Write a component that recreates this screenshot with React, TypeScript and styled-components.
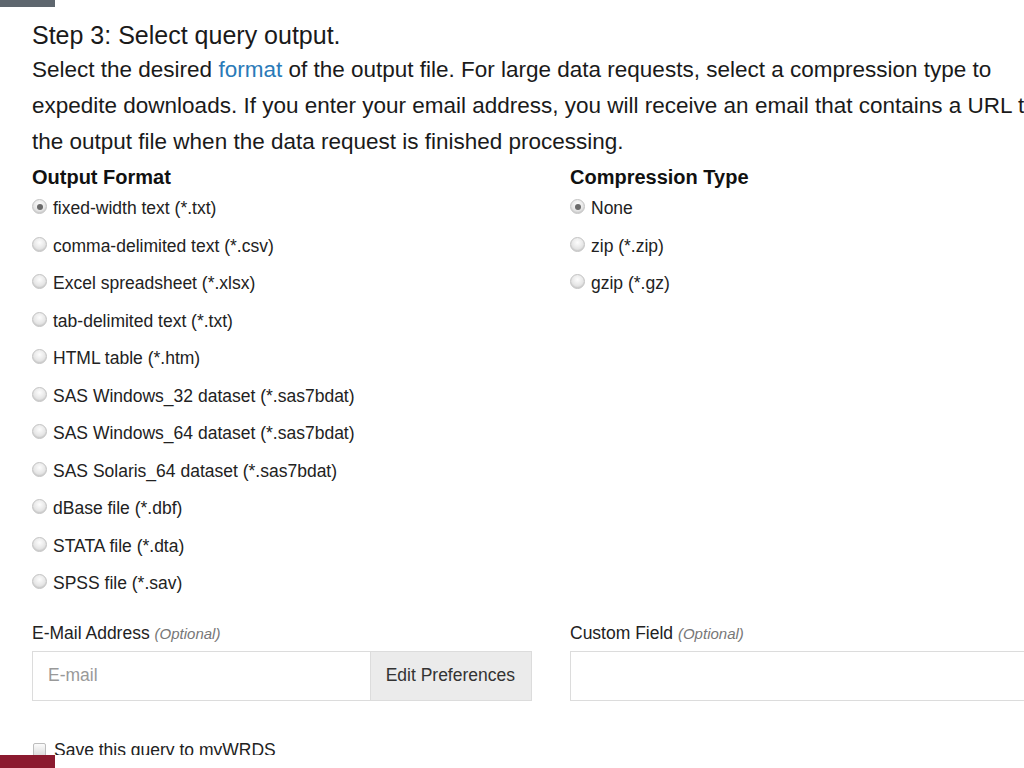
import styled, { createGlobalStyle } from "styled-components";

const GlobalStyle = createGlobalStyle`
    html, body {
        margin: 0;
        padding: 0;
        background: #fff;
        overflow: hidden;
    }
    body {
        font-family: "Liberation Sans", Arial, sans-serif;
        color: #222;
    }
`

const Page = styled.div`
    width: 1070px;
    height: 768px;
    padding: 20px 0 0 32px;
    box-sizing: border-box;
`

const TopTab = styled.div`
    position: fixed;
    top: 0;
    left: 0;
    width: 55px;
    height: 7px;
    background: #5e666e;
`

const BottomStrip = styled.div`
    position: fixed;
    left: 0;
    bottom: 0;
    width: 100%;
    height: 13px;
    background: #fff;
    display: flex;
`

const BottomBrand = styled.div`
    width: 55px;
    height: 100%;
    background: #8b1a2f;
`

const Title = styled.h2`
    margin: 0;
    font-size: 25px;
    line-height: 30px;
    font-weight: normal;
    color: #1a1a1a;
`

const Intro = styled.p`
    margin: 2px 0 0;
    font-size: 22.5px;
    line-height: 36px;
    white-space: nowrap;
    color: #1a1a1a;
`

const Link = styled.a`
    color: #2a7ab8;
    text-decoration: none;
`

const Columns = styled.div`
    display: grid;
    grid-template-columns: 538px 500px;
    margin-top: 4px;
`

const Heading = styled.div`
    font-size: 20px;
    font-weight: bold;
    line-height: 26px;
    color: #111;
`

const OptionList = styled.div`
    display: flex;
    flex-direction: column;
`

const Option = styled.label`
    display: flex;
    align-items: center;
    height: 37.5px;
    gap: 6px;
    font-size: 17.5px;
    color: #222;
`

const RadioDot = styled.span<{ $checked?: boolean }>`
    position: relative;
    flex: none;
    width: 15px;
    height: 15px;
    border-radius: 50%;
    box-sizing: border-box;
    border: 1px solid #c2c2c2;
    background: radial-gradient(circle at 50% 35%, #fdfdfd 0%, #e6e6e6 55%, #cfcfcf 100%);
    box-shadow: inset 0 -1px 1px rgba(0, 0, 0, 0.08);
    margin-top: -4px;

    &::after {
        content: "";
        display: ${p => (p.$checked ? "block" : "none")};
        position: absolute;
        left: 3.5px;
        top: 3.5px;
        width: 6px;
        height: 6px;
        border-radius: 50%;
        background: #6a6a6a;
    }
`

const FieldRow = styled.div`
    display: grid;
    grid-template-columns: 538px 500px;
    margin-top: 18px;
`

const FieldLabel = styled.div`
    font-size: 17.5px;
    line-height: 24px;
    color: #222;
`

const Optional = styled.span`
    font-size: 15px;
    font-style: italic;
    color: #777;
`

const InputGroup = styled.div`
    display: flex;
    width: 500px;
    height: 50px;
    margin-top: 5px;
`

const TextBox = styled.div`
    flex: 1;
    display: flex;
    align-items: center;
    padding-left: 15px;
    box-sizing: border-box;
    border: 1px solid #dcdcdc;
    background: #fff;
    font-size: 17.5px;
    color: #999;
`

const AddonButton = styled.div`
    display: flex;
    align-items: center;
    padding: 0 16px 0 15px;
    border: 1px solid #dcdcdc;
    border-left: none;
    background: #ebebeb;
    font-size: 17.5px;
    color: #333;
`

const SaveRow = styled.label`
    display: flex;
    align-items: center;
    gap: 8px;
    margin-top: 39px;
    padding-left: 1px;
    font-size: 17.5px;
    color: #222;
`

const CheckBox = styled.span`
    flex: none;
    width: 13px;
    height: 14px;
    border-radius: 2px;
    box-sizing: border-box;
    border: 1px solid #bdbdbd;
    background: linear-gradient(#fbfbfb, #dadada);
`

const formats = [
    "fixed-width text (*.txt)",
    "comma-delimited text (*.csv)",
    "Excel spreadsheet (*.xlsx)",
    "tab-delimited text (*.txt)",
    "HTML table (*.htm)",
    "SAS Windows_32 dataset (*.sas7bdat)",
    "SAS Windows_64 dataset (*.sas7bdat)",
    "SAS Solaris_64 dataset (*.sas7bdat)",
    "dBase file (*.dbf)",
    "STATA file (*.dta)",
    "SPSS file (*.sav)",
]

const compressions = ["None", "zip (*.zip)", "gzip (*.gz)"]

function App() {
    return (
        <>
            <GlobalStyle />
            <TopTab />
            <Page>
                <Title>Step 3: Select query output.</Title>
                <Intro>
                    Select the desired <Link href="#">format</Link> of the output file. For large data requests, select a compression type to
                    <br />
                    expedite downloads. If you enter your email address, you will receive an email that contains a URL to
                    <br />
                    the output file when the data request is finished processing.
                </Intro>
                <Columns>
                    <div>
                        <Heading>Output Format</Heading>
                        <OptionList>
                            {formats.map((f, i) => (
                                <Option key={f}>
                                    <RadioDot $checked={i === 0} />
                                    {f}
                                </Option>
                            ))}
                        </OptionList>
                    </div>
                    <div>
                        <Heading>Compression Type</Heading>
                        <OptionList>
                            {compressions.map((c, i) => (
                                <Option key={c}>
                                    <RadioDot $checked={i === 0} />
                                    {c}
                                </Option>
                            ))}
                        </OptionList>
                    </div>
                </Columns>
                <FieldRow>
                    <div>
                        <FieldLabel>
                            E-Mail Address <Optional>(Optional)</Optional>
                        </FieldLabel>
                        <InputGroup>
                            <TextBox>E-mail</TextBox>
                            <AddonButton>Edit Preferences</AddonButton>
                        </InputGroup>
                    </div>
                    <div>
                        <FieldLabel>
                            Custom Field <Optional>(Optional)</Optional>
                        </FieldLabel>
                        <InputGroup>
                            <TextBox />
                        </InputGroup>
                    </div>
                </FieldRow>
                <SaveRow>
                    <CheckBox />
                    Save this query to myWRDS
                </SaveRow>
            </Page>
            <BottomStrip>
                <BottomBrand />
            </BottomStrip>
        </>
    )
}

export default App;
